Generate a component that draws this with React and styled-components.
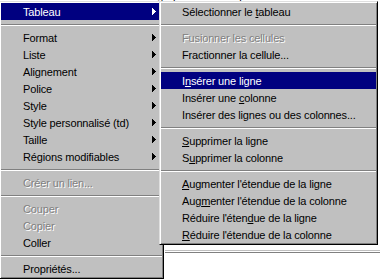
import React from "react";
import styled, { createGlobalStyle } from "styled-components";

const Global = createGlobalStyle`
  html, body { margin: 0; padding: 0; background: #fff; }
  body { font-family: "Liberation Sans", Arial, sans-serif; }
`;

const Page = styled.div`
  position: relative;
  width: 380px;
  height: 280px;
  overflow: hidden;
  background: #fff;
`;

const Doc = styled.div`
  display: flex;
  flex-direction: column;
  font-size: 11px;
  color: #000;
`;

const DocLine = styled.div`
  display: flex;
  gap: 40px;
  height: 12px;
  line-height: 12px;
  margin-top: -10px;
  padding-left: 4px;
  white-space: nowrap;
`;

const DocRule = styled.div`
  margin-top: 248px;
  margin-left: 165px;
  height: 1px;
  border-top: 1px solid #c0c0c0;
  border-bottom: 1px solid #808080;
`;

const Menu = styled.div`
  position: absolute;
  top: 1px;
  left: ${(p) => p.$left}px;
  width: ${(p) => p.$width}px;
  box-sizing: border-box;
  padding: 1px;
  background: #c0c0c0;
  border: 1px solid;
  border-color: #dfdfdf #000 #000 #dfdfdf;
  box-shadow: inset 1px 1px #fff, inset -1px -1px #808080;
  display: flex;
  flex-direction: column;
  font-size: 11px;
  letter-spacing: -0.15px;
`;

const Item = styled.div`
  display: flex;
  align-items: center;
  height: 17px;
  padding: 0 ${(p) => p.$right}px 0 ${(p) => p.$indent}px;
  background: ${(p) => (p.$active ? "#000080" : "transparent")};
  color: ${(p) => (p.$active ? "#fff" : p.$disabled ? "#808080" : "#000")};
  text-shadow: ${(p) => (p.$disabled ? "1px 1px 0 #fff" : "none")};
  white-space: nowrap;
`;

const Label = styled.span`
  flex: 1;
`;

const Key = styled.span`
  text-decoration: underline;
`;

const Separator = styled.div`
  height: 0;
  margin: 4px 0 3px;
  border-top: 1px solid #808080;
  border-bottom: 1px solid #fff;
`;

const Arrow = ({ color }) => (
  <svg width="4" height="7" viewBox="0 0 4 7" shapeRendering="crispEdges">
    <rect x="0" y="0" width="1" height="7" fill={color} />
    <rect x="1" y="1" width="1" height="5" fill={color} />
    <rect x="2" y="2" width="1" height="3" fill={color} />
    <rect x="3" y="3" width="1" height="1" fill={color} />
  </svg>
);

const renderLabel = (text, key) => {
  if (key == null) return text;
  return (
    <>
      {text.slice(0, key)}
      <Key>{text[key]}</Key>
      {text.slice(key + 1)}
    </>
  );
};

const mainItems = [
  { t: "Tableau", sub: true, active: true },
  "-",
  { t: "Format", sub: true },
  { t: "Liste", sub: true },
  { t: "Alignement", sub: true },
  { t: "Police", sub: true },
  { t: "Style", sub: true },
  { t: "Style personnalisé (td)", sub: true },
  { t: "Taille", sub: true },
  { t: "Régions modifiables", sub: true },
  "-",
  { t: "Créer un lien...", dis: true },
  "-",
  { t: "Couper", dis: true },
  { t: "Copier", dis: true },
  { t: "Coller" },
  "-",
  { t: "Propriétés..." },
];

const subItems = [
  { t: "Sélectionner le tableau", k: 16 },
  "-",
  { t: "Fusionner les cellules", dis: true },
  { t: "Fractionner la cellule..." },
  "-",
  { t: "Insérer une ligne", k: 1, active: true },
  { t: "Insérer une colonne", k: 12 },
  { t: "Insérer des lignes ou des colonnes..." },
  "-",
  { t: "Supprimer la ligne", k: 0 },
  { t: "Supprimer la colonne", k: 1 },
  "-",
  { t: "Augmenter l'étendue de la ligne", k: 0 },
  { t: "Augmenter l'étendue de la colonne", k: 3 },
  { t: "Réduire l'étendue de la ligne", k: 14 },
  { t: "Réduire l'étendue de la colonne", k: 0 },
];

const MenuList = ({ items, left, width, indent, right }) => (
  <Menu $left={left} $width={width}>
    {items.map((it, i) =>
      it === "-" ? (
        <Separator key={i} />
      ) : (
        <Item
          key={i}
          $active={it.active}
          $disabled={it.dis}
          $indent={indent}
          $right={right}
        >
          <Label>{renderLabel(it.t, it.k)}</Label>
          {it.sub && <Arrow color={it.active ? "#fff" : "#000"} />}
        </Item>
      )
    )}
  </Menu>
);

export default function App() {
  return (
    <>
      <Global />
      <Page>
        <Doc>
          <DocLine>
            <span>Modifier le tableau</span>
            <span>Paragraphs</span>
            <span>Options des cellules</span>
          </DocLine>
          <DocRule />
        </Doc>
        <MenuList items={mainItems} left={-1} width={165} indent={22} right={6} />
        <MenuList items={subItems} left={159} width={219} indent={21} right={4} />
      </Page>
    </>
  );
}
